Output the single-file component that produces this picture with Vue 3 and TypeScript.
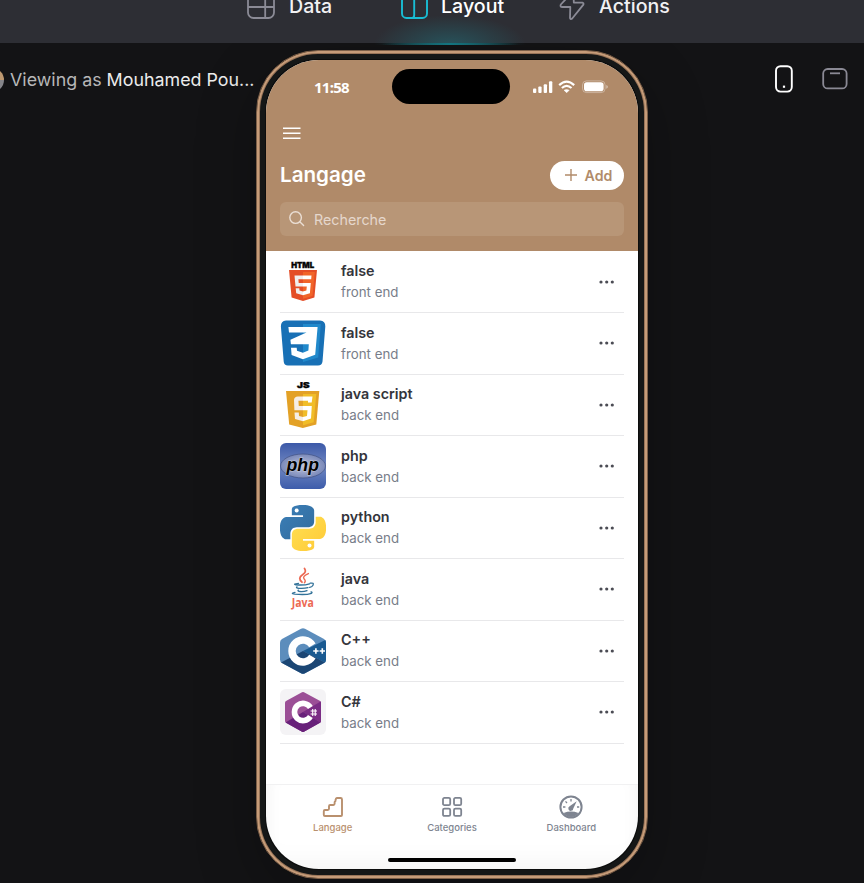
<script setup lang="ts">
import { ref } from 'vue'

type Logo = 'html' | 'css' | 'js' | 'php' | 'python' | 'java' | 'cpp' | 'csharp'

interface Language {
  logo: Logo
  name: string
  category: string
}

const languages: Language[] = [
  { logo: 'html', name: 'false', category: 'front end' },
  { logo: 'css', name: 'false', category: 'front end' },
  { logo: 'js', name: 'java script', category: 'back end' },
  { logo: 'php', name: 'php', category: 'back end' },
  { logo: 'python', name: 'python', category: 'back end' },
  { logo: 'java', name: 'java', category: 'back end' },
  { logo: 'cpp', name: 'C++', category: 'back end' },
  { logo: 'csharp', name: 'C#', category: 'back end' },
]

const tabs = ['Langage', 'Categories', 'Dashboard']
const activeTab = ref('Langage')
</script>

<template>
  <div class="builder">
    <header class="topbar">
      <a class="mode data">
        <svg width="28" height="28" viewBox="0 0 28 28" fill="none" stroke="#8b8b96" stroke-width="1.8">
          <rect x="1" y="1" width="26" height="26" rx="5.5" />
          <path d="M1 16H27M18.2 1V27" />
        </svg>
        <span>Data</span>
      </a>
      <a class="mode layout active">
        <svg width="27" height="28" viewBox="0 0 27 28" fill="none" stroke="#19bdd4" stroke-width="1.9">
          <rect x="1" y="1" width="25" height="26" rx="4.5" />
          <path d="M13.2 1V24Q13.2 27 11 27" />
        </svg>
        <span>Layout</span>
      </a>
      <a class="mode actions">
        <svg width="26" height="30" viewBox="0 0 26 30" fill="none" stroke="#8b8b96" stroke-width="1.8" stroke-linejoin="round">
          <path d="M14.5 1L1.8 14.5Q1 16.6 2.6 17H11.3L11 28Q11.6 29.9 13.2 28.5L24.4 14.6Q24.8 12.9 23.4 12.6H14.8Z" />
        </svg>
        <span>Actions</span>
      </a>
      <i class="glow" />
    </header>

    <main class="stage">
      <div class="viewer">
        <span class="avatar" />
        <span class="viewing">Viewing as <b>Mouhamed Pou...</b></span>
      </div>

      <div class="phone">
        <div class="screen">
          <div class="hero">
            <div class="status">
              <span class="time">11:58</span>
              <span class="island" />
              <svg class="signals" width="76" height="14" viewBox="0 0 76 14">
                <g fill="#fff">
                  <rect x="0" y="8.5" width="3.3" height="4.5" rx="1" />
                  <rect x="5.3" y="6.5" width="3.3" height="6.5" rx="1" />
                  <rect x="10.7" y="4.2" width="3.3" height="8.8" rx="1" />
                  <rect x="16" y="1.3" width="3.3" height="11.7" rx="1" />
                  <path d="M31 10.2Q33.6 8.8 36.2 10.2L33.7 12.7z" stroke="#fff" stroke-width=".5" stroke-linejoin="round" />
                </g>
                <g fill="none" stroke="#fff" stroke-width="2.2">
                  <path d="M26.2 5.1Q33.6-1.9 41.2 5.1" />
                  <path d="M28.9 8Q33.6 3.6 38.5 8" />
                </g>
                <rect x="49.5" y=".9" width="22.6" height="11.7" rx="4" fill="none" stroke="#fff" stroke-opacity=".35" />
                <rect x="51" y="2.3" width="19.6" height="8.9" rx="2.8" fill="#fff" />
                <path d="M73.2 5Q75 5.5 75 6.8T73.2 8.7Z" fill="#fff" opacity=".4" />
              </svg>
            </div>
            <svg class="menu" width="18" height="13" viewBox="0 0 18 13" stroke="#fff" stroke-width="1.6">
              <path d="M0 1.3H17.5M0 6.2H17.5M0 11.2H17.5" />
            </svg>
            <div class="heading">
              <h1>Langage</h1>
              <button class="add">
                <svg width="12" height="12" viewBox="0 0 12 12" stroke="#b18b6a" stroke-width="1.4"><path d="M6 0V12M0 6H12" /></svg>
                <span>Add</span>
              </button>
            </div>
            <label class="search">
              <svg width="16" height="16" viewBox="0 0 16 16" fill="none" stroke="#eaded4" stroke-width="1.4" stroke-linecap="round">
                <circle cx="6.6" cy="6.6" r="5.8" /><path d="M10.8 10.8L14.6 14.4" />
              </svg>
              <span>Recherche</span>
            </label>
          </div>

          <ul class="list">
            <li v-for="item in languages" :key="item.logo" class="row">
              <svg class="logo" width="46" height="46" viewBox="0 0 46 46">
                <g v-if="item.logo === 'html'">
                  <text x="11.2" y="8.8" font-family="Inter" font-size="7.6" font-weight="900" textLength="23" lengthAdjust="spacingAndGlyphs" stroke="#111" stroke-width=".4">HTML</text>
                  <path d="M9 11H37L34.4 38.6L23 42L11.6 38.6Z" fill="#e44d26" />
                  <path d="M23 13H34.8L32.5 37L23 39.8Z" fill="#f16529" />
                  <path d="M14.5 16.6H23V20.2H18.4L18.7 24H23V27.6H15.5ZM15.7 29.2H19.3L19.5 31.5L23 32.5V36.2L16.2 34.2Z" fill="#f0eeee" />
                  <path d="M22.9 16.6H31.5L31.2 20.2H22.9ZM22.9 24H30.8L29.9 34.2L22.9 36.2V32.5L26.4 31.5L26.8 27.6H22.9Z" fill="#fff" />
                </g>
                <g v-else-if="item.logo === 'css'">
                  <path d="M6 .5H40Q45.5 1 45.3 6.5L42.5 41.5Q42 45.5 38 45.6H8Q4 45.5 3.7 41.5L.9 6.5Q.8 1 6 .5Z" fill="#1870b5" />
                  <path d="M23 4H40.8L38.2 37.6L23 42Z" fill="#2189cb" />
                  <path d="M8.4 7H37.6L35.2 34.8L22.9 39.3L11.6 34.9L11 27.8H16.7L17 30.8L22.9 32.8L28.4 30.6L28.8 24.2H10.9L10.4 19.8L26.5 12.6H9Z" fill="#fff" />
                </g>
                <g v-else-if="item.logo === 'js'">
                  <text x="17" y="5.9" font-family="Inter" font-size="7.6" font-weight="900" textLength="12.5" lengthAdjust="spacingAndGlyphs" stroke="#111" stroke-width=".4">JS</text>
                  <path d="M6 9H39.3L36.3 42.4L22.8 46L9.2 42.4Z" fill="#e3a126" />
                  <path d="M23 12H36.3L33.7 40.2L23 43.2Z" fill="#f1bd28" />
                  <path d="M23 14.5H18Q14.2 14.5 14 18L14.4 28.3H23V24H18.8L18.4 18.8H23ZM14.5 30.5H18.8L19 34L23 35V39.2L15 37Z" fill="#f5eee6" />
                  <path d="M22.9 14.5H32.5L31.7 20.5H28V18.8H22.9ZM22.9 24H31.8L31 36.6L22.9 39.2V35L27 34L27.5 28.3H22.9Z" fill="#fff" />
                </g>
                <g v-else-if="item.logo === 'php'">
                  <defs>
                    <linearGradient id="phpTile" x2="0" y2="1"><stop stop-color="#3c59a8" /><stop offset=".5" stop-color="#7087c1" /><stop offset="1" stop-color="#3d5cab" /></linearGradient>
                    <radialGradient id="phpOval"><stop stop-color="#bec3dd" /><stop offset="1" stop-color="#7a89b9" /></radialGradient>
                  </defs>
                  <rect width="46" height="46" rx="6" fill="url(#phpTile)" />
                  <ellipse cx="23" cy="23" rx="22.5" ry="12" fill="url(#phpOval)" stroke="#425183" stroke-width=".7" />
                  <text x="6.5" y="27.6" font-family="Liberation Sans" font-size="17.5" font-weight="700" font-style="italic" textLength="32.5" lengthAdjust="spacingAndGlyphs" stroke="#c4cadb" stroke-width="1" paint-order="stroke">php</text>
                </g>
                <g v-else-if="item.logo === 'python'" transform="scale(1.917)">
                  <defs>
                    <linearGradient id="pyBlue" x2="1" y2="1"><stop stop-color="#3b7fb8" /><stop offset="1" stop-color="#326b9c" /></linearGradient>
                    <linearGradient id="pyGold" x2="1" y2="1"><stop stop-color="#ffe052" /><stop offset="1" stop-color="#ffc936" /></linearGradient>
                  </defs>
                  <path fill="url(#pyBlue)" d="M14.25.18l.9.2.73.26.59.3.45.32.34.34.25.34.16.33.1.3.04.26.02.2-.01.13V8.5l-.05.63-.13.55-.21.46-.26.38-.3.31-.33.25-.35.19-.35.14-.33.1-.3.07-.26.04-.21.02H8.77l-.69.05-.59.14-.5.22-.41.27-.33.32-.27.35-.2.36-.15.37-.1.35-.07.32-.04.27-.02.21v3.06H3.17l-.21-.03-.28-.07-.32-.12-.35-.18-.36-.26-.36-.36-.35-.46-.32-.59-.28-.73-.21-.88-.14-1.05-.05-1.23.06-1.22.16-1.04.24-.87.32-.71.36-.57.4-.44.42-.33.42-.24.4-.16.36-.1.32-.05.24-.01h.16l.06.01h8.16v-.83H6.18l-.01-2.75-.02-.37.05-.34.11-.31.17-.28.25-.26.31-.23.38-.2.44-.18.51-.15.58-.12.64-.1.71-.06.77-.04.84-.02 1.27.05z" />
                  <path fill="url(#pyGold)" d="M21.04 6.11l.28.06.32.12.35.18.36.27.36.35.35.47.32.59.28.73.21.88.14 1.04.05 1.23-.06 1.23-.16 1.04-.24.86-.32.71-.36.57-.4.45-.42.33-.42.24-.4.16-.36.09-.32.05-.24.02-.16-.01h-8.22v.82h5.84l.01 2.76.02.36-.05.34-.11.31-.17.29-.25.25-.31.24-.38.2-.44.17-.51.15-.58.13-.64.09-.71.07-.77.04-.84.01-1.27-.04-1.07-.14-.9-.2-.73-.25-.59-.3-.45-.33-.34-.34-.25-.34-.16-.33-.1-.3-.04-.25-.02-.2.01-.13v-5.34l.05-.64.13-.54.21-.46.26-.38.3-.32.33-.24.35-.2.35-.14.33-.1.3-.06.26-.04.21-.02.13-.01h5.84l.69-.05.59-.14.5-.21.41-.28.33-.32.27-.35.2-.36.15-.36.1-.35.07-.32.04-.28.02-.21V6.07h2.09z" />
                  <circle cx="8.7" cy="2.9" r="1.05" fill="#fff" /><circle cx="15.4" cy="21.1" r="1.05" fill="#fff" />
                </g>
                <g v-else-if="item.logo === 'java'" fill="none" stroke-linecap="round">
                  <g stroke="#ec6953">
                    <path d="M24.5 2.5Q27 6 22.5 8.7Q17.3 12 22 16.2" stroke-width="1.8" />
                    <path d="M28.4 7.6Q21.8 10.4 24.2 13.1Q26.2 15 24.4 16.7" stroke-width="1.4" />
                  </g>
                  <g stroke="#327299" stroke-width="1.3">
                    <path d="M18.5 17.3Q12.4 18.1 16 18.8Q24.5 19.5 29.5 17.8M17 20.9Q15.4 22 19 22.3Q24 22.7 28 21.6M18.4 24.1Q17 25.2 20.4 25.5Q24 25.7 27 24.6M15 26.4Q9.6 27.3 14.8 28.1Q26 29.2 31.5 27.3Q32.8 26.4 31 26" />
                    <path d="M30.2 17.2Q34.4 16.4 33 19.2Q32.2 20.8 29.7 21.4" />
                  </g>
                  <text x="11.8" y="40.9" font-family="Open Sans" font-size="12" font-weight="700" textLength="22" lengthAdjust="spacingAndGlyphs" fill="#ec6953" stroke="none">Java</text>
                </g>
                <g v-else-if="item.logo === 'cpp'">
                  <path d="M21 .8Q23 -.2 25 .8L44 11Q46 12.2 46 14.5V31.5Q46 33.8 44 35L25 45.3Q23 46.3 21 45.3L2 35Q0 33.8 0 31.5V14.5Q0 12.2 2 11Z" fill="#5c8dbc" />
                  <path d="M23 23L45.3 12Q46 13 46 14.5V31.5Q46 33.8 45 34.4Z" fill="#1a5a91" />
                  <path d="M23 23L45 34.4L25 45.3Q23 46.3 21 45.3L1 34.4Z" fill="#1b4674" />
                  <path d="M32.4 17.3A11 11 0 1 0 32.4 28.7" fill="none" stroke="#fff" stroke-width="7.4" />
                  <path d="M33.2 23H38.6M35.9 20.3V25.7M39.6 23H45M42.3 20.3V25.7" stroke="#fff" stroke-width="1.6" />
                </g>
                <g v-else>
                  <rect width="46" height="46" rx="6" fill="#f4f3f5" />
                  <path d="M22 3.2Q23 2.7 24 3.2L40.2 12.1Q41 12.7 41 14V32Q41 33.2 40 33.8L24 42.7Q23 43.3 22 42.7L6 33.8Q5 33.2 5 32V14Q5 12.7 6 12.1Z" fill="#9b4f96" />
                  <path d="M23 23L40.6 12.6Q41 13 41 14V32Q41 33 40.5 33.5Z" fill="#7b2d85" />
                  <path d="M23 23L40.5 33.5L24 42.7Q23 43.3 22 42.7L5.5 33.5Z" fill="#68217a" />
                  <path d="M30.4 18.5A8.6 8.6 0 1 0 30.4 27.5" fill="none" stroke="#fff" stroke-width="5.6" />
                  <path d="M30.6 22H37M30.6 25H37M32.7 20V27M35.2 20V27" stroke="#fff" stroke-width="1.1" />
                </g>
              </svg>
              <div class="info">
                <strong>{{ item.name }}</strong>
                <span>{{ item.category }}</span>
              </div>
              <svg class="more" width="16" height="4" viewBox="0 0 16 4" fill="#4b4c54">
                <circle cx="2" cy="2" r="1.6" /><circle cx="7.7" cy="2" r="1.6" /><circle cx="13.3" cy="2" r="1.6" />
              </svg>
            </li>
          </ul>

          <nav class="tabbar">
            <a v-for="tab in tabs" :key="tab" class="tab" :class="{ current: tab === activeTab }">
              <svg v-if="tab === 'Langage'" width="24" height="24" viewBox="0 0 24 24" fill="none" stroke="currentColor" stroke-width="1.9" stroke-linejoin="round">
                <path d="M4 21Q2.8 21 2.8 20V16.2Q2.8 15 4 15H6.8Q8 15 8 13.8V11.2Q8 10 9.2 10H12.4Q13.6 10 13.6 8.8V7.4Q13.6 6.6 14.4 6.2Q14.6 3 16.2 3H19.5Q21 3 21 4.5V20Q21 21 20 21Z" />
              </svg>
              <svg v-else-if="tab === 'Categories'" width="24" height="24" viewBox="0 0 24 24" fill="none" stroke="currentColor" stroke-width="1.8">
                <rect x="3" y="2.9" width="7.2" height="7.2" rx="1.4" /><rect x="14" y="2.9" width="7.2" height="7.2" rx="1.4" />
                <rect x="3" y="13.7" width="7.2" height="7.2" rx="1.4" /><rect x="14" y="13.7" width="7.2" height="7.2" rx="1.4" />
              </svg>
              <svg v-else width="24" height="24" viewBox="0 0 24 24" fill="none" stroke="currentColor">
                <circle cx="12" cy="12" r="10.6" stroke-width="2" />
                <path d="M4.6 18Q12 15.2 19.4 18Q16.7 22 12 22T4.6 18Z" fill="currentColor" stroke="none" />
                <path d="M12 4V6.6M6.5 6.4L8 8M4 12H6.4M18 12H20.2" stroke-width="1.3" />
                <path d="M17.7 6.3L14.3 13.4A2.5 2.5 0 1 1 10.6 11.2Z" fill="currentColor" stroke="none" />
              </svg>
              <span>{{ tab }}</span>
            </a>
            <i class="home" />
          </nav>
        </div>
      </div>

      <div class="devices">
        <svg width="18" height="28" viewBox="0 0 18 28" fill="none" stroke="#fff" stroke-width="1.9">
          <rect x="1" y="1.2" width="15.8" height="25.4" rx="4.5" />
          <rect x="7.9" y="20.6" width="2.2" height="2.2" fill="#fff" stroke="none" />
        </svg>
        <svg width="26" height="22" viewBox="0 0 26 22" fill="none" stroke="#8a8994" stroke-width="1.8">
          <rect x="1.2" y="1" width="23.4" height="19.4" rx="4.5" />
          <path d="M8 5.3H18" />
        </svg>
      </div>
    </main>
  </div>
</template>

<style>
body {
  background: #131315;
  overflow: hidden;
}
</style>

<style scoped>
.builder {
  width: 864px;
  height: 883px;
  overflow: hidden;
  background: #131315;
  font-family: Inter, sans-serif;
  display: flex;
  flex-direction: column;
}
.topbar {
  position: relative;
  z-index: 1;
  flex: none;
  height: 43px;
  box-sizing: border-box;
  background: #2d2e34;
  display: flex;
  align-items: flex-start;
  padding-left: 247px;
}
.mode {
  display: flex;
  align-items: center;
  height: 28px;
  margin-top: -9px;
  color: #f1f1f3;
  font-size: 19.6px;
  font-weight: 500;
  line-height: 30px;
  white-space: nowrap;
}
.mode span {
  padding-top: 2px;
}
.data {
  width: 154px;
  gap: 14px;
}
.layout {
  width: 158px;
  gap: 13px;
}
.actions {
  gap: 14px;
}
.active {
  color: #fff;
}
.glow {
  position: absolute;
  left: 374px;
  bottom: -2px;
  width: 152px;
  height: 38px;
  background:
    linear-gradient(90deg, transparent 5%, #137580 50%, transparent 95%) bottom / 100% 2px no-repeat,
    radial-gradient(ellipse 76px 30px at 50% 100%, rgba(35, 105, 115, 0.62), transparent);
}
.stage {
  flex: 1;
  display: flex;
  align-items: flex-start;
}
.viewer {
  width: 256px;
  flex: none;
  margin-top: 24px;
  height: 25px;
  display: flex;
  align-items: center;
  gap: 6px;
}
.avatar {
  width: 24px;
  height: 24px;
  flex: none;
  margin-left: -20px;
  border-radius: 50%;
  background: linear-gradient(#bd9870 50%, #85858a 52%);
}
.viewing {
  font-size: 17.85px;
  color: #b7b7b8;
  white-space: nowrap;
}
.viewing b {
  font-weight: 400;
  color: #ececec;
}
.phone {
  flex: none;
  width: 392px;
  height: 829px;
  margin-top: 7px;
  box-sizing: border-box;
  border: 1px solid #7d6049;
  border-radius: 62px;
  background: #0c0d0d;
  box-shadow: inset 0 0 0 2px #c69c79, inset 0 0 0 3px #987458, inset 0 0 0 8px #151717, 0 20px 60px rgba(0, 0, 0, 0.25);
  padding: 9px;
}
.screen {
  width: 372px;
  height: 809px;
  border-radius: 53px;
  overflow: hidden;
  background: #fff;
  display: flex;
  flex-direction: column;
}
.hero {
  height: 191px;
  flex: none;
  box-sizing: border-box;
  padding: 9px 14px 0;
  background: #b08a69;
  display: flex;
  flex-direction: column;
  color: #fff;
}
.status {
  height: 35px;
  display: grid;
  grid-template-columns: 112px 118px 1fr;
  align-items: center;
}
.time {
  padding-left: 34px;
  font-family: 'Noto Sans', sans-serif;
  font-size: 15px;
  line-height: 20px;
  font-weight: 700;
  letter-spacing: -0.75px;
}
.island {
  height: 35px;
  border-radius: 18px;
  background: #000;
}
.signals {
  margin-left: 23px;
}
.menu {
  margin: 23px 0 0 2.6px;
}
.heading {
  display: flex;
  align-items: center;
  justify-content: space-between;
  height: 29px;
  margin-top: 21px;
}
h1 {
  margin: 0;
  padding-bottom: 2px;
  font-size: 20.6px;
  line-height: 26px;
  font-weight: 600;
}
.add {
  width: 74px;
  height: 29px;
  padding: 0 0 1px 3px;
  border: 0;
  border-radius: 15px;
  background: #fff;
  color: #b18b6a;
  font: 600 14.2px Inter, sans-serif;
  display: flex;
  align-items: center;
  justify-content: center;
  gap: 8px;
}
.search {
  height: 34px;
  margin-top: 12px;
  border-radius: 6px;
  background: #b89677;
  color: #e5d7cc;
  display: flex;
  align-items: center;
  gap: 9px;
  padding-left: 9px;
  font-size: 14.3px;
}
.list {
  list-style: none;
  margin: 0;
  padding: 0.5px 14px 0;
  flex: 1;
}
.row {
  height: 61.5px;
  box-sizing: border-box;
  border-bottom: 1px solid #e8e8ea;
  display: flex;
  align-items: center;
}
.logo {
  flex: none;
}
.info {
  flex: 1;
  margin-left: 15px;
  display: flex;
  flex-direction: column;
  gap: 1px;
}
.info strong {
  font-size: 14.3px;
  line-height: 20px;
  font-weight: 600;
  color: #34353b;
}
.info span {
  font-size: 13.3px;
  line-height: 20px;
  color: #787d89;
}
.more {
  margin-right: 9px;
}
.tabbar {
  position: relative;
  height: 85px;
  box-sizing: border-box;
  border-top: 1px solid #f1f1f2;
  padding: 10px 7px 0;
  display: grid;
  grid-template-columns: repeat(3, 1fr);
  align-items: start;
  box-shadow: inset 0 -16px 30px -14px rgba(0, 0, 0, 0.06), inset 14px 0 20px -16px rgba(0, 0, 0, 0.06), inset -14px 0 20px -16px rgba(0, 0, 0, 0.06);
}
.tab {
  display: flex;
  flex-direction: column;
  align-items: center;
  color: #7e8490;
  font-size: 9.5px;
  line-height: 12px;
  font-weight: 500;
  gap: 3px;
}
.current {
  color: #b9906e;
}
.home {
  position: absolute;
  left: 122px;
  bottom: 7px;
  width: 128px;
  height: 4px;
  border-radius: 3px;
  background: #000;
}
.devices {
  display: flex;
  align-items: center;
  gap: 29px;
  height: 28px;
  margin: 22px 0 0 127px;
}
</style>
